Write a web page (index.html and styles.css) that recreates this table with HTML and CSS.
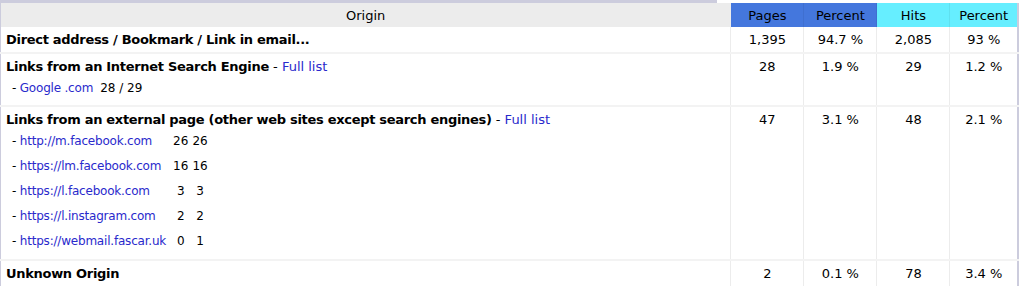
FILE: index.html
```html
<!DOCTYPE html>
<html>
<head>
<meta charset="utf-8">
<link rel="stylesheet" href="styles.css">
</head>
<body>
<div class="frame">
  <div class="title-strip"></div>
  <table class="data">
    <colgroup>
      <col class="c-origin"><col class="c-num"><col class="c-num"><col class="c-num"><col class="c-last">
    </colgroup>
    <thead>
      <tr>
        <th class="h-origin">Origin</th>
        <th class="h-pages">Pages</th>
        <th class="h-pages">Percent</th>
        <th class="h-hits">Hits</th>
        <th class="h-hits">Percent</th>
      </tr>
    </thead>
    <tbody>
      <tr>
        <td class="label"><b>Direct address / Bookmark / Link in email...</b></td>
        <td>1,395</td><td>94.7 %</td><td>2,085</td><td>93 %</td>
      </tr>
      <tr>
        <td class="label search"><b>Links from an Internet Search Engine</b> - <a href="#">Full list</a>
          <table class="items">
            <tr><td class="item">- <a href="#">Google .com</a></td><td class="n">28 / 29</td></tr>
          </table>
        </td>
        <td>28</td><td>1.9 %</td><td>29</td><td>1.2 %</td>
      </tr>
      <tr>
        <td class="label external"><b>Links from an external page (other web sites except search engines)</b> - <a href="#">Full list</a>
          <table class="items">
            <tr><td class="item">- <a href="#">http://m.facebook.com</a></td><td class="n">26</td><td class="n">26</td></tr>
            <tr><td class="item">- <a href="#">https://lm.facebook.com</a></td><td class="n">16</td><td class="n">16</td></tr>
            <tr><td class="item">- <a href="#">https://l.facebook.com</a></td><td class="n">3</td><td class="n">3</td></tr>
            <tr><td class="item">- <a href="#">https://l.instagram.com</a></td><td class="n">2</td><td class="n">2</td></tr>
            <tr><td class="item">- <a href="#">https://webmail.fascar.uk</a></td><td class="n">0</td><td class="n">1</td></tr>
          </table>
        </td>
        <td>47</td><td>3.1 %</td><td>48</td><td>2.1 %</td>
      </tr>
      <tr>
        <td class="label"><b>Unknown Origin</b></td>
        <td>2</td><td>0.1 %</td><td>78</td><td>3.4 %</td>
      </tr>
    </tbody>
  </table>
</div>
</body>
</html>
```

FILE: styles.css
```css
html, body {
  margin: 0;
  padding: 0;
  background: #ffffff;
}

body {
  font-family: "DejaVu Sans", Verdana, sans-serif;
  color: #000000;
}

.frame {
  width: 1019px;
}

.title-strip {
  width: 717px;
  height: 3px;
  background: #ccccdd;
}

.data {
  width: 1019px;
  border-collapse: collapse;
  table-layout: fixed;
  border-left: 1px solid #ccccdd;
  border-right: 2px solid #ccccdd;
}

.c-origin { width: 730px; }
.c-num { width: 73px; }
.c-last { width: 68px; }

.data th {
  height: 24px;
  padding: 0;
  font-weight: normal;
  font-size: 13px;
  text-align: center;
  background: #ececec;
  border-right: 1px solid #ececec;
}

.data th.h-pages {
  background: #4477dd;
  border-right-color: #3f6fd0;
}

.data th.h-hits {
  background: #66eeff;
  border-right-color: #5fe0ef;
}

.data td {
  font-size: 13px;
  text-align: center;
  vertical-align: top;
  padding: 4px 2px 4px 2px;
  line-height: 17px;
  border-right: 1px solid #ececec;
  border-bottom: 2px solid #f3f3f3;
}

.data td.label {
  text-align: left;
  padding-left: 5px;
}

.data td.label b {
  letter-spacing: -0.3px;
}

.data td.search {
  padding-bottom: 4px;
}

.data td.external {
  padding-bottom: 5px;
}

a {
  color: #2929cc;
  text-decoration: none;
  font-weight: normal;
}

.items {
  border-collapse: collapse;
  margin-top: 1px;
}

.items td {
  border: none;
  font-size: 12px;
  height: 25px;
  line-height: 25px;
  padding: 0 1px;
  vertical-align: middle;
}

.items td.item {
  text-align: left;
  padding: 0 6px 0 6px;
  letter-spacing: -0.2px;
}

.items td.n {
  text-align: center;
  padding: 0 1px;
}

.items td.n + td.n {
  padding-left: 3px;
}
```
